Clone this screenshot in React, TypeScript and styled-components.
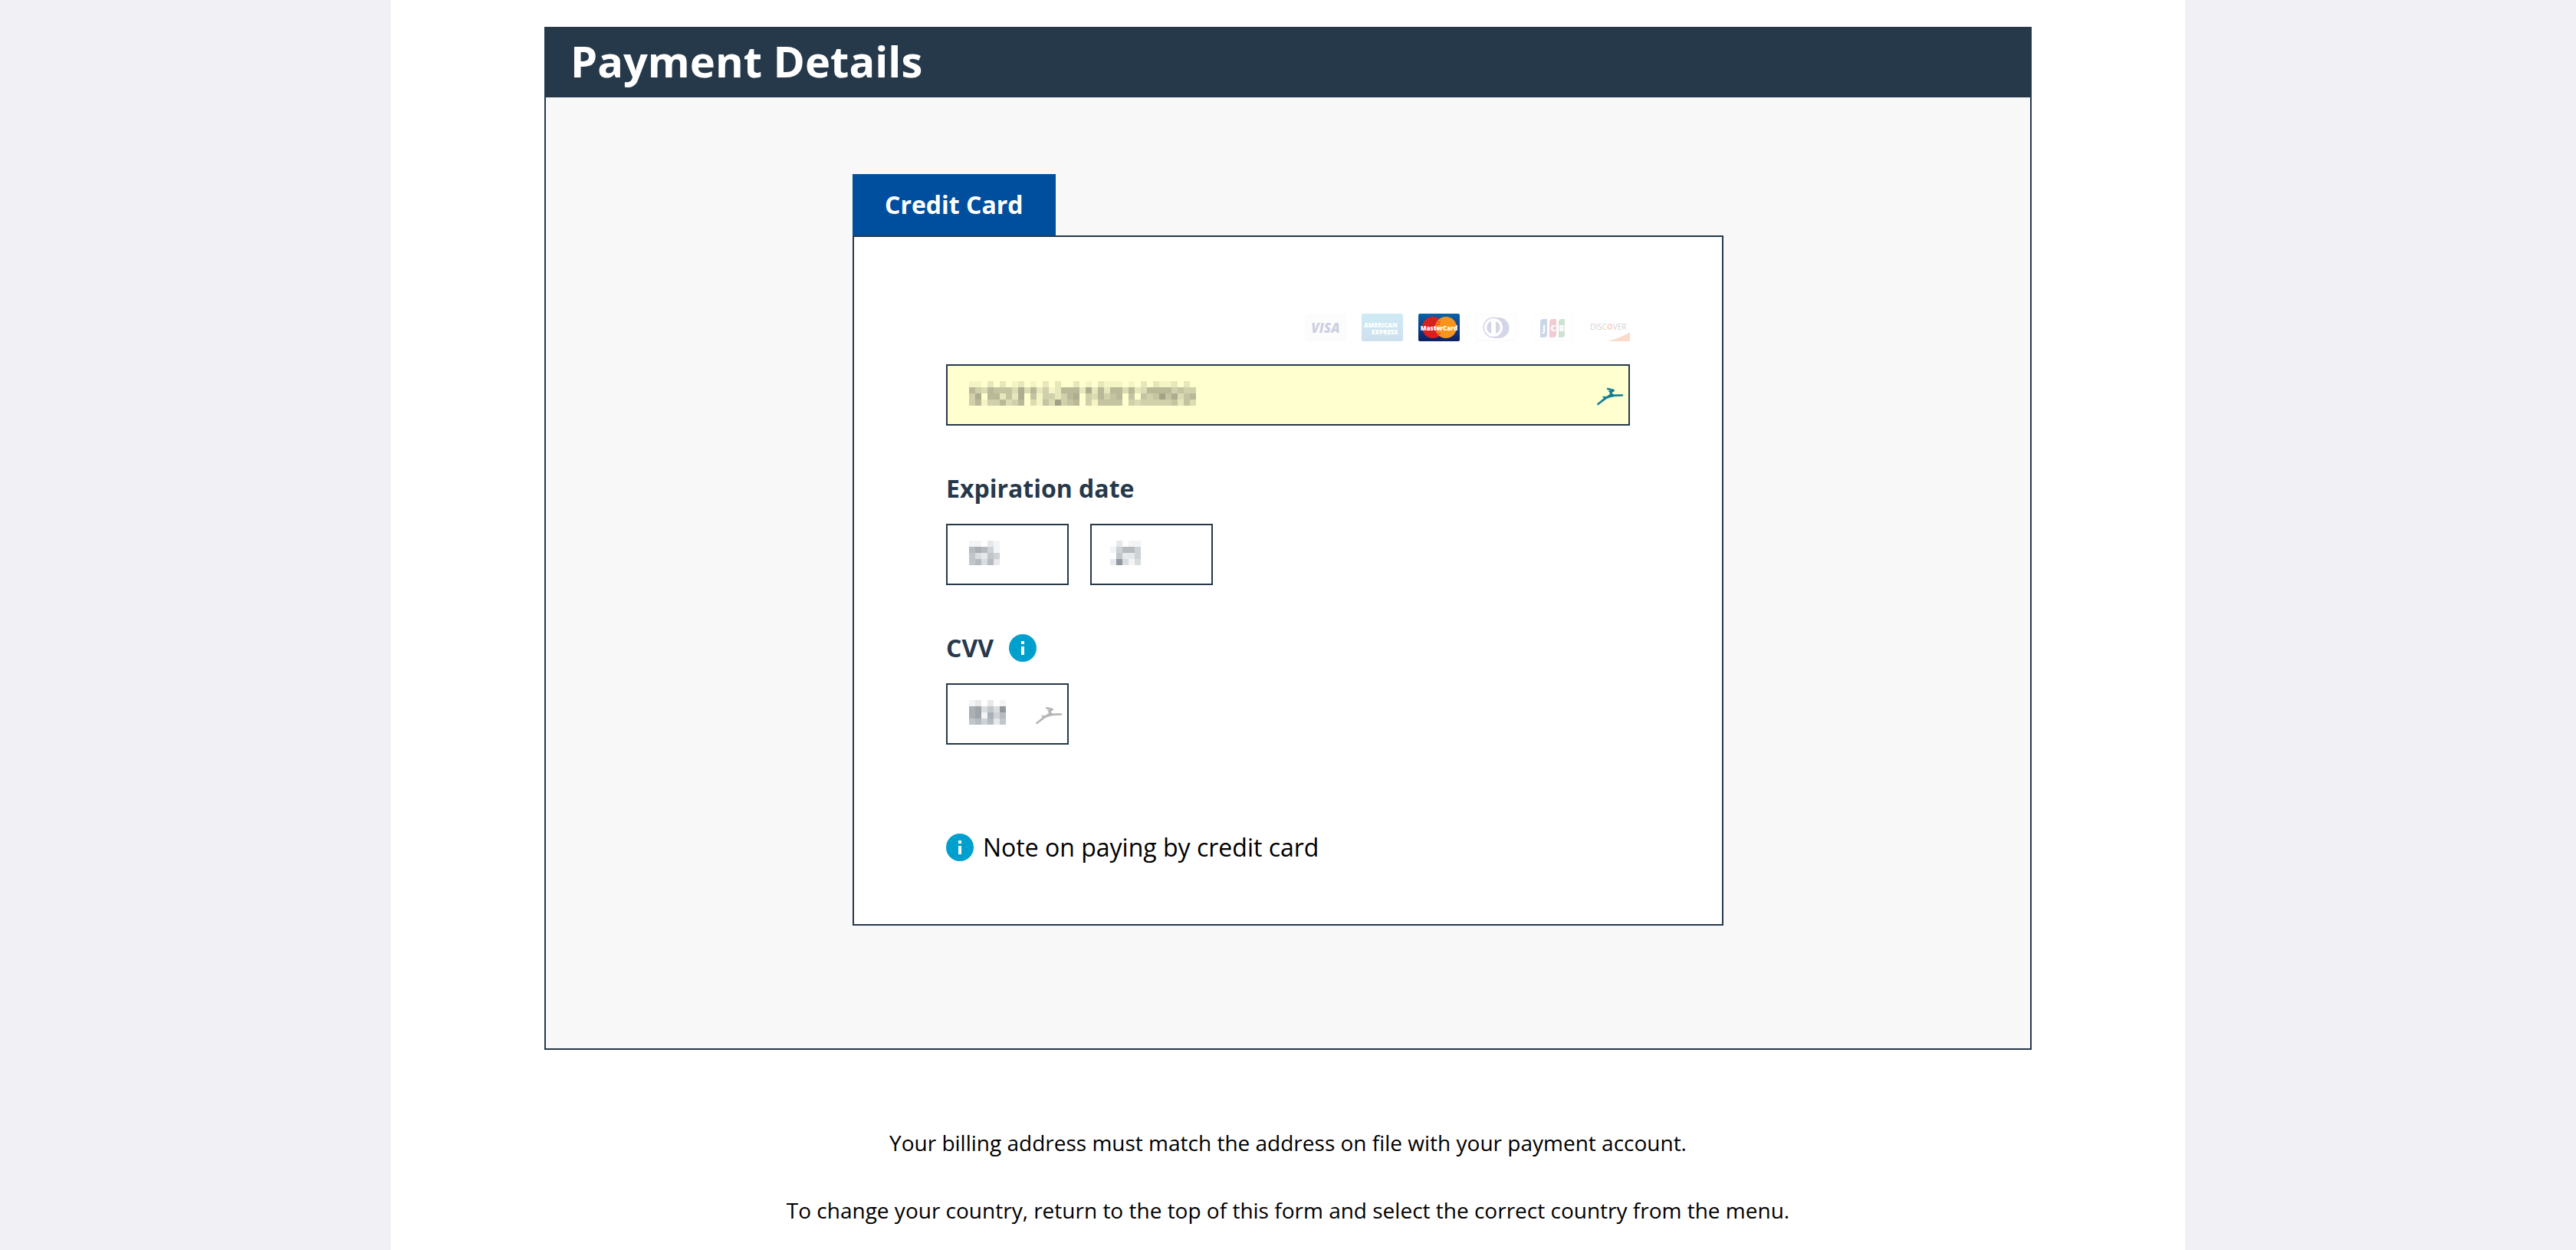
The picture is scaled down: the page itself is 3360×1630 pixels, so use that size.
import React from "react";
import styled, { createGlobalStyle } from "styled-components";

const navy = "#26394b";
const fontStack = '"Open Sans", "Noto Sans", sans-serif';

const GlobalStyle = createGlobalStyle`
  *, *::before, *::after { box-sizing: border-box; }
  body {
    margin: 0;
    background: #f1f1f5;
    color: #000;
    font-family: ${fontStack};
  }
`;

const Page = styled.main`
  max-width: 2340px;
  min-height: 100vh;
  margin: 0 auto;
  padding: 35px 200px 0;
  background: #fff;
`;

const Panel = styled.section`
  border: 2px solid ${navy};
  background: #f8f8f8;
`;

const PanelHeader = styled.header`
  padding: 4px 32px 10px;
  background: ${navy};
`;

const PanelTitle = styled.h2`
  margin: 0;
  color: #fff;
  font-size: 56px;
  font-weight: 700;
  line-height: 76px;
`;

const PanelBody = styled.div`
  display: flex;
  flex-direction: column;
  align-items: center;
  padding: 100px 32px 160px;
`;

const Method = styled.div`
  width: 100%;
  max-width: 1136px;
`;

const Tabs = styled.div`
  display: flex;
`;

const Tab = styled.button`
  padding: 18px 42px;
  border: 0;
  background: #004f9f;
  color: #fff;
  font-family: inherit;
  font-size: 32px;
  font-weight: 700;
  line-height: 44px;
`;

const Card = styled.form`
  display: flex;
  flex-direction: column;
  padding: 100px 120px 78px;
  border: 2px solid ${navy};
  background: #fff;
`;

const Brands = styled.ul`
  display: flex;
  justify-content: flex-end;
  gap: 20px;
  margin: 0 0 30px;
  padding: 0;
  list-style: none;
`;

const Brand = styled.li<{ $active?: boolean }>`
  width: 54px;
  height: 36px;
  opacity: ${(p) => (p.$active ? 1 : 0.23)};

  svg { display: block; }
`;

const Field = styled.div`
  display: flex;
  flex-direction: column;
  gap: 24px;
  margin-top: 60px;
`;

const FieldHead = styled.div`
  display: flex;
  align-items: center;
  gap: 20px;
`;

const Label = styled.label`
  color: ${navy};
  font-size: 32px;
  font-weight: 700;
  line-height: 44px;
`;

const Inputs = styled.div`
  display: flex;
  gap: 28px;
`;

const InputBox = styled.div<{ $wide?: boolean }>`
  position: relative;
  width: ${(p) => (p.$wide ? "100%" : "160px")};
`;

const Input = styled.input<{ $filled?: boolean }>`
  display: block;
  width: 100%;
  height: 80px;
  padding: 0 28px;
  border: 2px solid ${navy};
  border-radius: 0;
  outline: 0;
  background: ${(p) => (p.$filled ? "#ffffcf" : "#fff")};
  color: ${navy};
  font-family: inherit;
  font-size: 32px;
`;

const Mask = styled.svg<{ $indent?: number }>`
  position: absolute;
  top: 22px;
  left: ${(p) => p.$indent ?? 30}px;
  pointer-events: none;
`;

const FillMark = styled.svg`
  position: absolute;
  top: 30px;
  right: 8px;
  pointer-events: none;
`;

const InfoButton = styled.button`
  display: flex;
  align-items: center;
  gap: 12px;
  padding: 0;
  border: 0;
  background: none;
  color: #000;
  font-family: inherit;
  font-size: 32px;
  line-height: 44px;
  text-align: left;
`;

const Note = styled.div`
  display: flex;
  margin-top: 112px;
`;

const Footer = styled.footer`
  display: flex;
  flex-direction: column;
  gap: 48px;
  padding-top: 101px;
  text-align: center;
`;

const FooterText = styled.p`
  margin: 0;
  font-size: 28px;
  line-height: 40px;
`;

/* Each digit is the darkness of one 8px tile over the hidden value. */
const numberTiles = [
  "1102020120102020020102111010202112020",
  "6436555373624126662726266362366664544",
  "4706625270514424670436456050545857356",
  "4614463460315384560415555043444445253",
];
const monthTiles = ["11021", "67641", "53254", "56362"];
const yearTiles = ["02011", "14664", "05224", "29313"];
const cvvTiles = ["120201", "783539", "781746", "564625"];

function Tiles({ rows, tone, indent }: { rows: string[]; tone: string; indent?: number }) {
  return (
    <Mask
      $indent={indent}
      width={rows[0].length * 8}
      height={rows.length * 8}
      fill={tone}
      shapeRendering="crispEdges"
      aria-hidden="true"
    >
      {rows.flatMap((row, y) =>
        row.split("").map((level, x) => (
          <rect key={`${x}-${y}`} x={x * 8} y={y * 8} width="8" height="8" opacity={Number(level) * 0.06} />
        ))
      )}
    </Mask>
  );
}

function Gazelle({ color }: { color: string }) {
  return (
    <FillMark width="36" height="24" viewBox="0 0 36 24" aria-hidden="true">
      <path
        fill={color}
        stroke={color}
        strokeWidth="0.7"
        strokeLinejoin="round"
        d="M14.6 1 23.6 3.3 23 5.4 20.7 6 20.8 8.4 23 9.8 34.6 9.6 34.8 11.2 23.5 11.8C18.5 13 15 13.7 12.6 15.4L2.2 23.2 1.2 21.8 10.3 14.3 8.4 12.2 13.5 12.2 18.2 9.2 17.7 6.2 16.1 5.2 20.2 4.6 14.2 2.7Z"
      />
    </FillMark>
  );
}

function InfoIcon() {
  return (
    <svg width="36" height="36" viewBox="0 0 36 36" aria-hidden="true">
      <circle cx="18" cy="18" r="18" fill="#00a0ce" />
      <path fill="#fff" d="M16 9h4v4h-4zM16 16h4v11h-4z" />
    </svg>
  );
}

const logoFont = '"Open Sans", "Liberation Sans", sans-serif';

function Visa() {
  return (
    <svg width="54" height="36" role="img" aria-label="Visa">
      <rect width="54" height="36" rx="2" fill="#f6f6f8" />
      <text x="27" y="25" textAnchor="middle" fill="#26337a" fontFamily={logoFont} fontSize="17" fontWeight="800" fontStyle="italic">VISA</text>
    </svg>
  );
}

function Amex() {
  return (
    <svg width="54" height="36" role="img" aria-label="American Express">
      <defs>
        <linearGradient id="amex" x1="0" y1="0" x2="0" y2="1">
          <stop offset="0" stopColor="#35a9d4" />
          <stop offset="1" stopColor="#2b7fb4" />
        </linearGradient>
      </defs>
      <rect width="54" height="36" rx="2" fill="url(#amex)" />
      <g fill="#fff" fontFamily={logoFont} fontSize="8" fontWeight="800">
        <text x="3" y="18">AMERICAN</text>
        <text x="13" y="27">EXPRESS</text>
      </g>
    </svg>
  );
}

function MasterCard() {
  return (
    <svg width="54" height="36" role="img" aria-label="MasterCard">
      <defs>
        <linearGradient id="mc" x1="0" y1="0" x2="0" y2="1">
          <stop offset="0" stopColor="#0a62a8" />
          <stop offset="1" stopColor="#0d1f61" />
        </linearGradient>
      </defs>
      <rect width="54" height="36" rx="2" fill="url(#mc)" />
      <circle cx="19" cy="18" r="14" fill="#d8201f" />
      <circle cx="36" cy="18" r="14" fill="#f7941c" />
      <path d="M25 11h4M23 14h5M23 22h5M25 26h4" stroke="#d8201f" strokeWidth="1" />
      <text x="27" y="22" textAnchor="middle" fill="#fff" fontFamily={logoFont} fontSize="8" fontWeight="800">MasterCard</text>
    </svg>
  );
}

function Diners() {
  return (
    <svg width="54" height="36" role="img" aria-label="Diners Club">
      <rect x="1" y="1" width="52" height="34" rx="2" fill="#fff" stroke="#e6e6ea" />
      <path d="M24 5h7a13 13 0 0 1 0 27h-7z" fill="#4a4f9c" />
      <circle cx="24" cy="18" r="13.5" fill="#4a4f9c" />
      <circle cx="24" cy="18" r="12" fill="#fff" />
      <path d="M21 10a8.5 8.5 0 0 0 0 16zM27 10a8.5 8.5 0 0 1 0 16z" fill="#4a4f9c" />
    </svg>
  );
}

function Jcb() {
  return (
    <svg width="54" height="36" role="img" aria-label="JCB">
      <rect x="1" y="1" width="52" height="34" rx="2" fill="#fff" stroke="#eeeef0" />
      <path d="M15 7h5v20q0 4-4 4h-5V11q0-4 4-4z" fill="#24519b" />
      <path d="M27 7h5v20q0 4-4 4h-5V11q0-4 4-4z" fill="#c9243f" />
      <path d="M39 7h4v20q0 4-4 4h-4V11q0-4 4-4z" fill="#2d8a43" />
      <g fill="#fff" fontFamily={logoFont} fontSize="11" fontWeight="800" textAnchor="middle">
        <text x="16" y="23">J</text>
        <text x="28" y="23">C</text>
        <text x="39" y="23">B</text>
      </g>
    </svg>
  );
}

function Discover() {
  return (
    <svg width="54" height="36" role="img" aria-label="Discover">
      <path d="M24 36Q42 32 54 24v12z" fill="#f0641e" />
      <text x="2" y="21" fill="#3f3a3a" fontFamily={logoFont} fontSize="10">
        DISC<tspan fill="#e65a1e" fontWeight="800">O</tspan>VER
      </text>
    </svg>
  );
}

export default function App() {
  return (
    <>
      <GlobalStyle />
      <Page>
        <Panel>
          <PanelHeader>
            <PanelTitle>Payment Details</PanelTitle>
          </PanelHeader>
          <PanelBody>
            <Method>
              <Tabs role="tablist">
                <Tab type="button" role="tab" aria-selected="true">Credit Card</Tab>
              </Tabs>
              <Card>
                <Brands>
                  <Brand><Visa /></Brand>
                  <Brand><Amex /></Brand>
                  <Brand $active><MasterCard /></Brand>
                  <Brand><Diners /></Brand>
                  <Brand><Jcb /></Brand>
                  <Brand><Discover /></Brand>
                </Brands>
                <InputBox $wide>
                  <Input $filled aria-label="Card number" inputMode="numeric" />
                  <Tiles rows={numberTiles} tone="#3c3c38" />
                  <Gazelle color="#0b7c93" />
                </InputBox>
                <Field>
                  <Label htmlFor="month">Expiration date</Label>
                  <Inputs>
                    <InputBox>
                      <Input id="month" inputMode="numeric" />
                      <Tiles rows={monthTiles} tone="#33424f" />
                    </InputBox>
                    <InputBox>
                      <Input aria-label="Expiration year" inputMode="numeric" />
                      <Tiles rows={yearTiles} tone="#33424f" indent={26} />
                    </InputBox>
                  </Inputs>
                </Field>
                <Field>
                  <FieldHead>
                    <Label htmlFor="cvv">CVV</Label>
                    <InfoButton type="button" aria-label="About the CVV">
                      <InfoIcon />
                    </InfoButton>
                  </FieldHead>
                  <InputBox>
                    <Input id="cvv" inputMode="numeric" />
                    <Tiles rows={cvvTiles} tone="#33424f" />
                    <Gazelle color="#b4b4b4" />
                  </InputBox>
                </Field>
                <Note>
                  <InfoButton type="button">
                    <InfoIcon />
                    Note on paying by credit card
                  </InfoButton>
                </Note>
              </Card>
            </Method>
          </PanelBody>
        </Panel>
        <Footer>
          <FooterText>Your billing address must match the address on file with your payment account.</FooterText>
          <FooterText>To change your country, return to the top of this form and select the correct country from the menu.</FooterText>
        </Footer>
      </Page>
    </>
  );
}
